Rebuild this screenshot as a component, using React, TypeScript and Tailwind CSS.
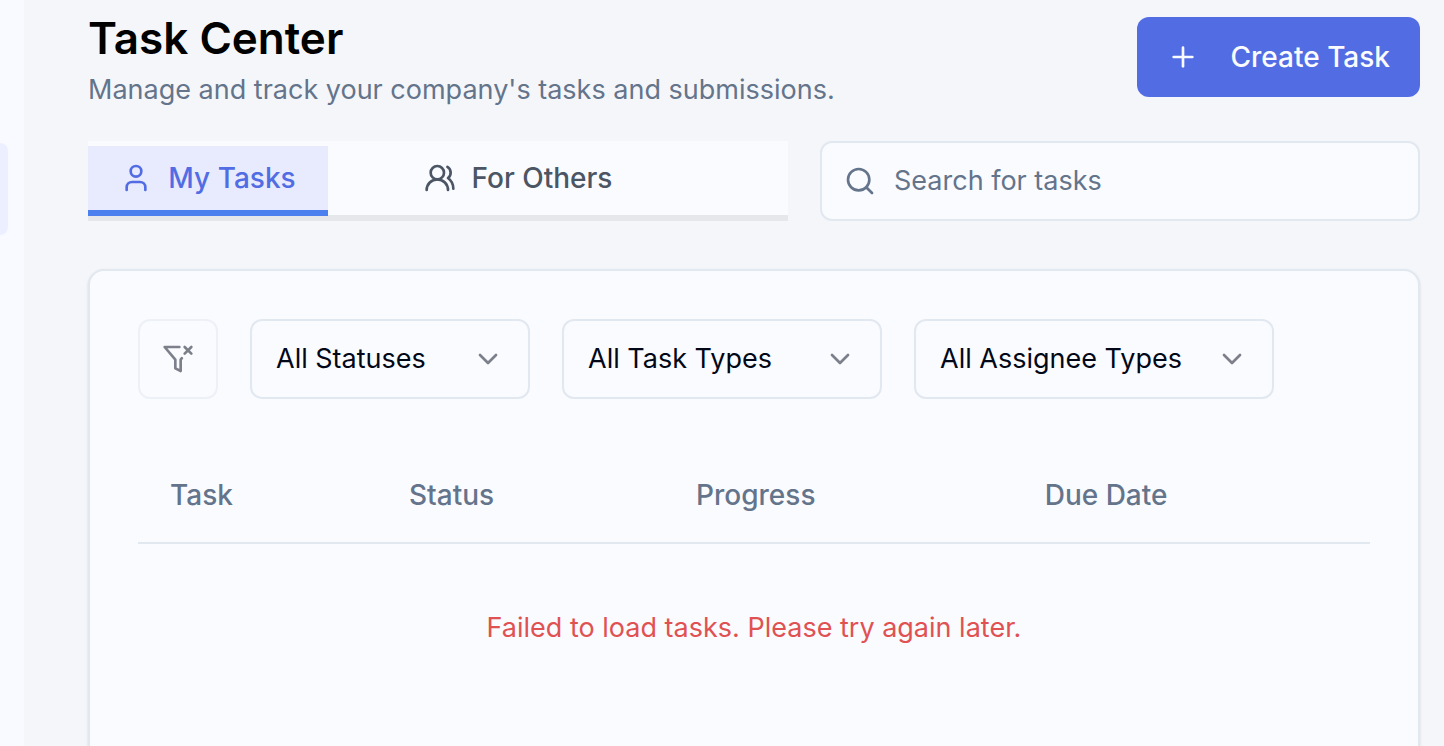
import { useState } from "react";
import type { ReactNode } from "react";
import { ChevronDown, Plus, Search, User, UsersRound } from "lucide-react";

const columns = [
  { name: "Task", width: "w-[19.4%]" },
  { name: "Status", width: "w-[23.3%]" },
  { name: "Progress", width: "w-[28.3%]" },
  { name: "Due Date", width: "w-[29%]" },
];

function FilterClearIcon() {
  return (
    <svg
      viewBox="0 0 24 24"
      className="size-8"
      fill="none"
      stroke="currentColor"
      strokeWidth="2"
      strokeLinecap="round"
      strokeLinejoin="round"
      aria-hidden="true"
    >
      <path d="M13.013 3H2l8 9.46V19l4 2v-8.54l.9-1.055" />
      <path d="m22 3-5 5" />
      <path d="m17 3 5 5" />
    </svg>
  );
}

function Tab({
  active,
  onClick,
  width,
  children,
}: {
  active: boolean;
  onClick: () => void;
  width: string;
  children: ReactNode;
}) {
  const tone = active
    ? "border-[#4c80ee] bg-[#e8ebfd] text-[#526de4]"
    : "border-transparent text-[#4b5563]";
  return (
    <button
      type="button"
      role="tab"
      aria-selected={active}
      onClick={onClick}
      className={`flex h-[70px] items-center justify-center gap-4 border-b-6 text-[28px] font-medium ${width} ${tone}`}
    >
      {children}
    </button>
  );
}

function FilterSelect({ label, option, width }: { label: string; option: string; width: string }) {
  return (
    <div className={`relative ${width}`}>
      <select
        aria-label={label}
        className="h-20 w-full appearance-none rounded-xl border-2 border-[#e2e8f0] bg-transparent pr-14 pl-6 text-[#020817]"
      >
        <option>{option}</option>
      </select>
      <ChevronDown className="pointer-events-none absolute top-6 right-[26px] size-8 text-[#020817] opacity-50" />
    </div>
  );
}

export default function App() {
  const [tab, setTab] = useState("mine");

  return (
    <div className="flex h-screen overflow-hidden bg-[#f5f6fa] font-[Inter,'Liberation_Sans',sans-serif] text-[27px] leading-10">
      <aside className="w-6 shrink-0 bg-[#f9faff] pt-[143px]">
        <div className="h-23 w-2 rounded-r-xl bg-[#ebefff]" />
      </aside>

      <main className="min-w-0 flex-1 pt-1 pr-6 pl-16">
        <header className="mb-[31px] flex items-center justify-between">
          <div className="pt-[2px]">
            <h1 className="text-[44px] leading-16 font-semibold text-black">Task Center</h1>
            <p className="text-[#64748b]">Manage and track your company's tasks and submissions.</p>
          </div>
          <button
            type="button"
            className="flex h-20 items-center gap-8 rounded-xl bg-[#526de4] px-[30px] text-[28px] font-medium text-[#fafbff]"
          >
            <Plus className="size-8" />
            Create Task
          </button>
        </header>

        <div className="mb-12 grid grid-cols-[7fr_6fr] gap-8">
          <div role="tablist" className="flex h-20 border-b-6 border-[#e5e7eb] bg-[#fafbff] pt-[5px]">
            <Tab active={tab === "mine"} onClick={() => setTab("mine")} width="w-60">
              <User className="size-8" />
              My Tasks
            </Tab>
            <Tab active={tab === "others"} onClick={() => setTab("others")} width="w-95">
              <UsersRound className="size-8" />
              For Others
            </Tab>
          </div>
          <label className="flex h-20 items-center gap-[18px] rounded-xl border-2 border-[#e2e8f0] bg-[#fafbff] px-[22px] text-[#64748b]">
            <Search className="size-8 shrink-0" />
            <input
              type="text"
              aria-label="Search for tasks"
              placeholder="Search for tasks"
              className="min-w-0 flex-1 bg-transparent outline-none placeholder:text-[#64748b]"
            />
          </label>
        </div>

        <section className="rounded-2xl border-2 border-[#e2e8f0] bg-[#fafbff] p-12 shadow-sm">
          <div className="mb-12 flex gap-8">
            <button
              type="button"
              aria-label="Clear filters"
              disabled
              className="flex size-20 items-center justify-center rounded-xl border-2 border-[#e2e8f0] text-[#020817] opacity-50"
            >
              <FilterClearIcon />
            </button>
            <FilterSelect label="Status" option="All Statuses" width="w-70" />
            <FilterSelect label="Task type" option="All Task Types" width="w-80" />
            <FilterSelect label="Assignee type" option="All Assignee Types" width="w-90" />
          </div>

          <table className="w-full table-fixed">
            <thead>
              <tr className="border-b-2 border-[#e2e8f0]">
                {columns.map((column) => (
                  <th
                    key={column.name}
                    scope="col"
                    className={`h-24 px-8 text-left text-[28px] font-medium text-[#64748b] ${column.width}`}
                  >
                    {column.name}
                  </th>
                ))}
              </tr>
            </thead>
            <tbody>
              <tr>
                <td colSpan={4} className="px-8 py-16 text-center text-[#e05252]">
                  Failed to load tasks. Please try again later.
                </td>
              </tr>
            </tbody>
          </table>
        </section>
      </main>
    </div>
  );
}
